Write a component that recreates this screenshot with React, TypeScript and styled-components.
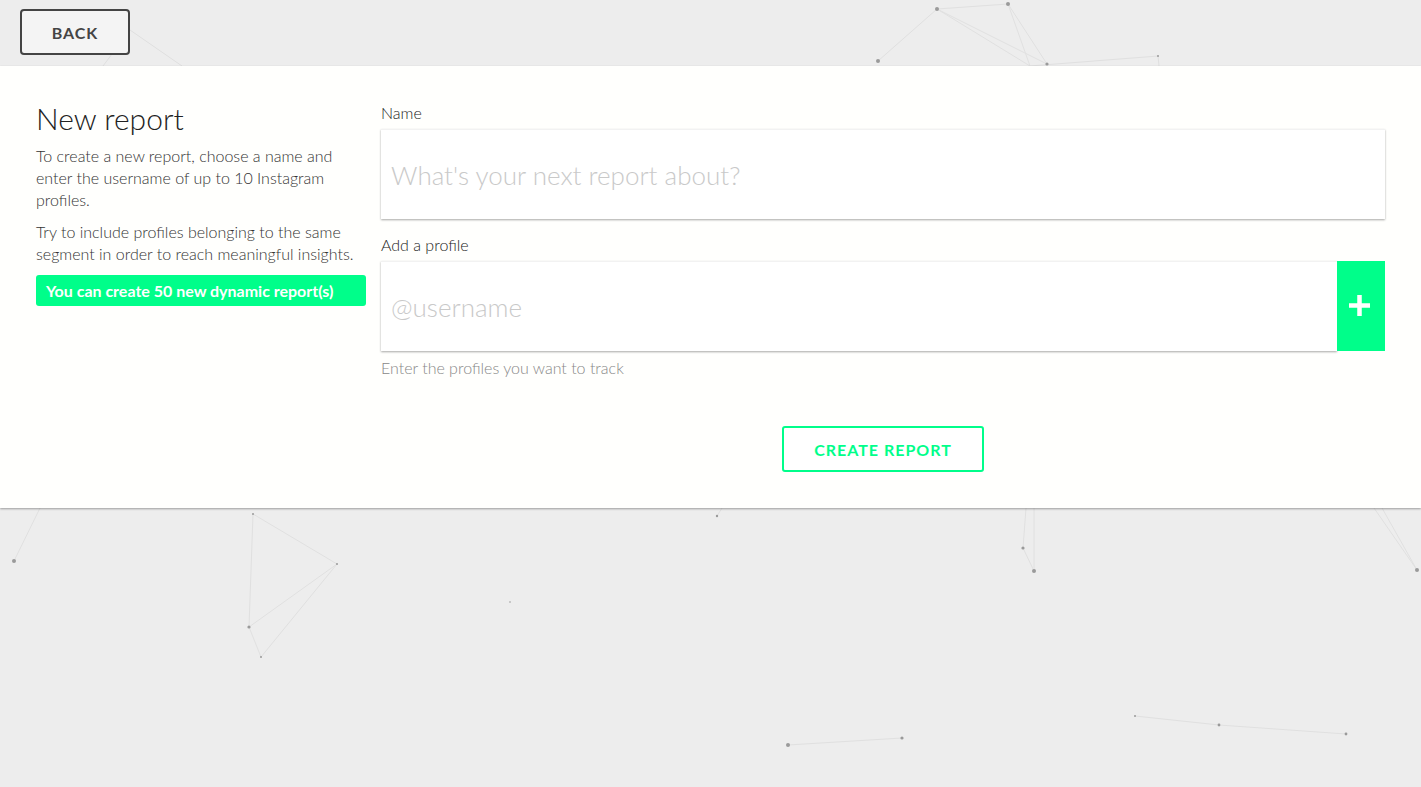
import React from 'react';
import styled, { createGlobalStyle } from 'styled-components';

const green = '#00fe8a';

const GlobalStyle = createGlobalStyle`
  html, body {
    margin: 0;
    padding: 0;
    background: #ededed;
    font-family: Lato, 'Open Sans', sans-serif;
  }
  * {
    box-sizing: border-box;
  }
`;

const Page = styled.div`
  position: relative;
  min-height: 787px;
  overflow: hidden;
`;

const Particles = styled.svg`
  position: absolute;
  top: 0;
  left: 0;
  width: 1421px;
  height: 787px;
  z-index: 0;
  pointer-events: none;
`;

const Content = styled.div`
  position: relative;
  z-index: 1;
`;

const TopBar = styled.div`
  height: 66px;
  padding: 9px 20px 0;
`;

const BackButton = styled.button`
  width: 110px;
  height: 46px;
  border: 2px solid #444;
  border-radius: 4px;
  background: #f4f4f4;
  color: #444;
  font-family: Lato, sans-serif;
  font-weight: 700;
  font-size: 16px;
  letter-spacing: 1px;
  cursor: pointer;
`;

const Panel = styled.div`
  background: #fffffd;
  box-shadow: 0 1px 2px rgba(0, 0, 0, 0.35);
  padding: 37px 36px 36px;
  display: flex;
  gap: 15px;
`;

const Intro = styled.div`
  width: 330px;
  flex: none;
  color: #333;
`;

const Title = styled.h1`
  margin: 0 0 12px;
  font-weight: 300;
  font-size: 30px;
  line-height: 30px;
  color: #222;
`;

const Paragraph = styled.p`
  margin: 0 0 10px;
  font-size: 16px;
  line-height: 22px;
  font-weight: 300;
`;

const Quota = styled.div`
  margin-top: 1px;
  height: 31px;
  background: ${green};
  border-radius: 3px;
  color: #fff;
  font-weight: 700;
  font-size: 16px;
  line-height: 31px;
  padding-left: 10px;
`;

const Form = styled.div`
  flex: 1;
  display: flex;
  flex-direction: column;
`;

const Label = styled.label`
  display: block;
  font-size: 16px;
  font-weight: 300;
  line-height: 20px;
  color: #222;
  margin-bottom: 6px;
`;

const FieldRow = styled.div<{ $gap: number }>`
  display: flex;
  height: 90px;
  margin-bottom: ${(p) => p.$gap}px;
`;

const TextInput = styled.input`
  flex: 1;
  min-width: 0;
  height: 100%;
  border: none;
  border-top: 1px solid #f2f2f2;
  background: #fff;
  box-shadow: 0 1px 2px rgba(0, 0, 0, 0.35);
  padding: 0 10px;
  font-family: Lato, sans-serif;
  font-weight: 300;
  font-size: 26px;
  color: #333;
  outline: none;

  &::placeholder {
    color: #c9c9c9;
  }
`;

const AddButton = styled.button`
  width: 48px;
  flex: none;
  border: none;
  background: ${green};
  display: flex;
  align-items: center;
  justify-content: center;
  cursor: pointer;
  padding: 0 3px 1px 0;
`;

const Hint = styled.div`
  font-size: 16px;
  line-height: 20px;
  color: #888;
  font-weight: 300;
`;

const Actions = styled.div`
  display: flex;
  justify-content: center;
  margin-top: 48px;
`;

const CreateButton = styled.button`
  width: 202px;
  height: 46px;
  border: 2px solid ${green};
  border-radius: 3px;
  background: #fff;
  color: ${green};
  font-family: Lato, sans-serif;
  font-weight: 700;
  font-size: 16px;
  letter-spacing: 1px;
  cursor: pointer;
`;

const dots: [number, number, number][] = [
  [878, 61, 2], [937, 9, 2], [1008, 4, 2], [1047, 64, 1.6], [1158, 56, 1],
  [14, 561, 2], [253, 514, 1], [337, 564, 1], [249, 627, 1.6], [261, 657, 1],
  [510, 602, 0.8], [717, 516, 1.2], [1023, 548, 1.6], [1034, 571, 2], [1417, 570, 2],
  [788, 745, 2], [902, 738, 1.6], [1135, 716, 1], [1219, 725, 1.4], [1346, 734, 1.4],
];

const lines: [number, number, number, number][] = [
  [878, 61, 937, 9], [937, 9, 1008, 4], [937, 9, 1047, 64], [937, 9, 1030, 66],
  [1008, 4, 1030, 66], [1008, 4, 1047, 64], [1030, 66, 1158, 56], [1158, 56, 1159, 66],
  [130, 30, 182, 66], [130, 30, 103, 66],
  [40, 508, 14, 561], [253, 514, 337, 564], [253, 514, 249, 627], [249, 627, 337, 564],
  [249, 627, 261, 657], [337, 564, 261, 657], [717, 516, 722, 508],
  [1023, 548, 1034, 571], [1023, 548, 1026, 508], [1034, 571, 1034, 508],
  [1417, 570, 1374, 508], [1417, 570, 1382, 508],
  [788, 745, 902, 738], [1135, 716, 1219, 725], [1219, 725, 1346, 734],
];

export default function App() {
  return (
    <Page>
      <GlobalStyle />
      <Particles viewBox="0 0 1421 787">
        {lines.map(([x1, y1, x2, y2], i) => (
          <line key={i} x1={x1} y1={y1} x2={x2} y2={y2} stroke="#e0e0e0" strokeWidth={1} />
        ))}
        {dots.map(([cx, cy, r], i) => (
          <circle key={i} cx={cx} cy={cy} r={r} fill="#9a9a9a" />
        ))}
      </Particles>
      <Content>
        <TopBar>
          <BackButton>BACK</BackButton>
        </TopBar>
        <Panel>
          <Intro>
            <Title>New report</Title>
            <Paragraph>
              To create a new report, choose a name and enter the username of up to 10 Instagram
              profiles.
            </Paragraph>
            <Paragraph>
              Try to include profiles belonging to the same segment in order to reach meaningful
              insights.
            </Paragraph>
            <Quota>You can create 50 new dynamic report(s)</Quota>
          </Intro>
          <Form>
            <Label>Name</Label>
            <FieldRow $gap={16}>
              <TextInput placeholder="What's your next report about?" />
            </FieldRow>
            <Label>Add a profile</Label>
            <FieldRow $gap={7}>
              <TextInput placeholder="@username" />
              <AddButton aria-label="Add profile">
                <svg width="21" height="21" viewBox="0 0 21 21">
                  <rect x="8.25" y="0" width="4.5" height="21" fill="#fff" />
                  <rect x="0" y="8.25" width="21" height="4.5" fill="#fff" />
                </svg>
              </AddButton>
            </FieldRow>
            <Hint>Enter the profiles you want to track</Hint>
            <Actions>
              <CreateButton>CREATE REPORT</CreateButton>
            </Actions>
          </Form>
        </Panel>
      </Content>
    </Page>
  );
}
